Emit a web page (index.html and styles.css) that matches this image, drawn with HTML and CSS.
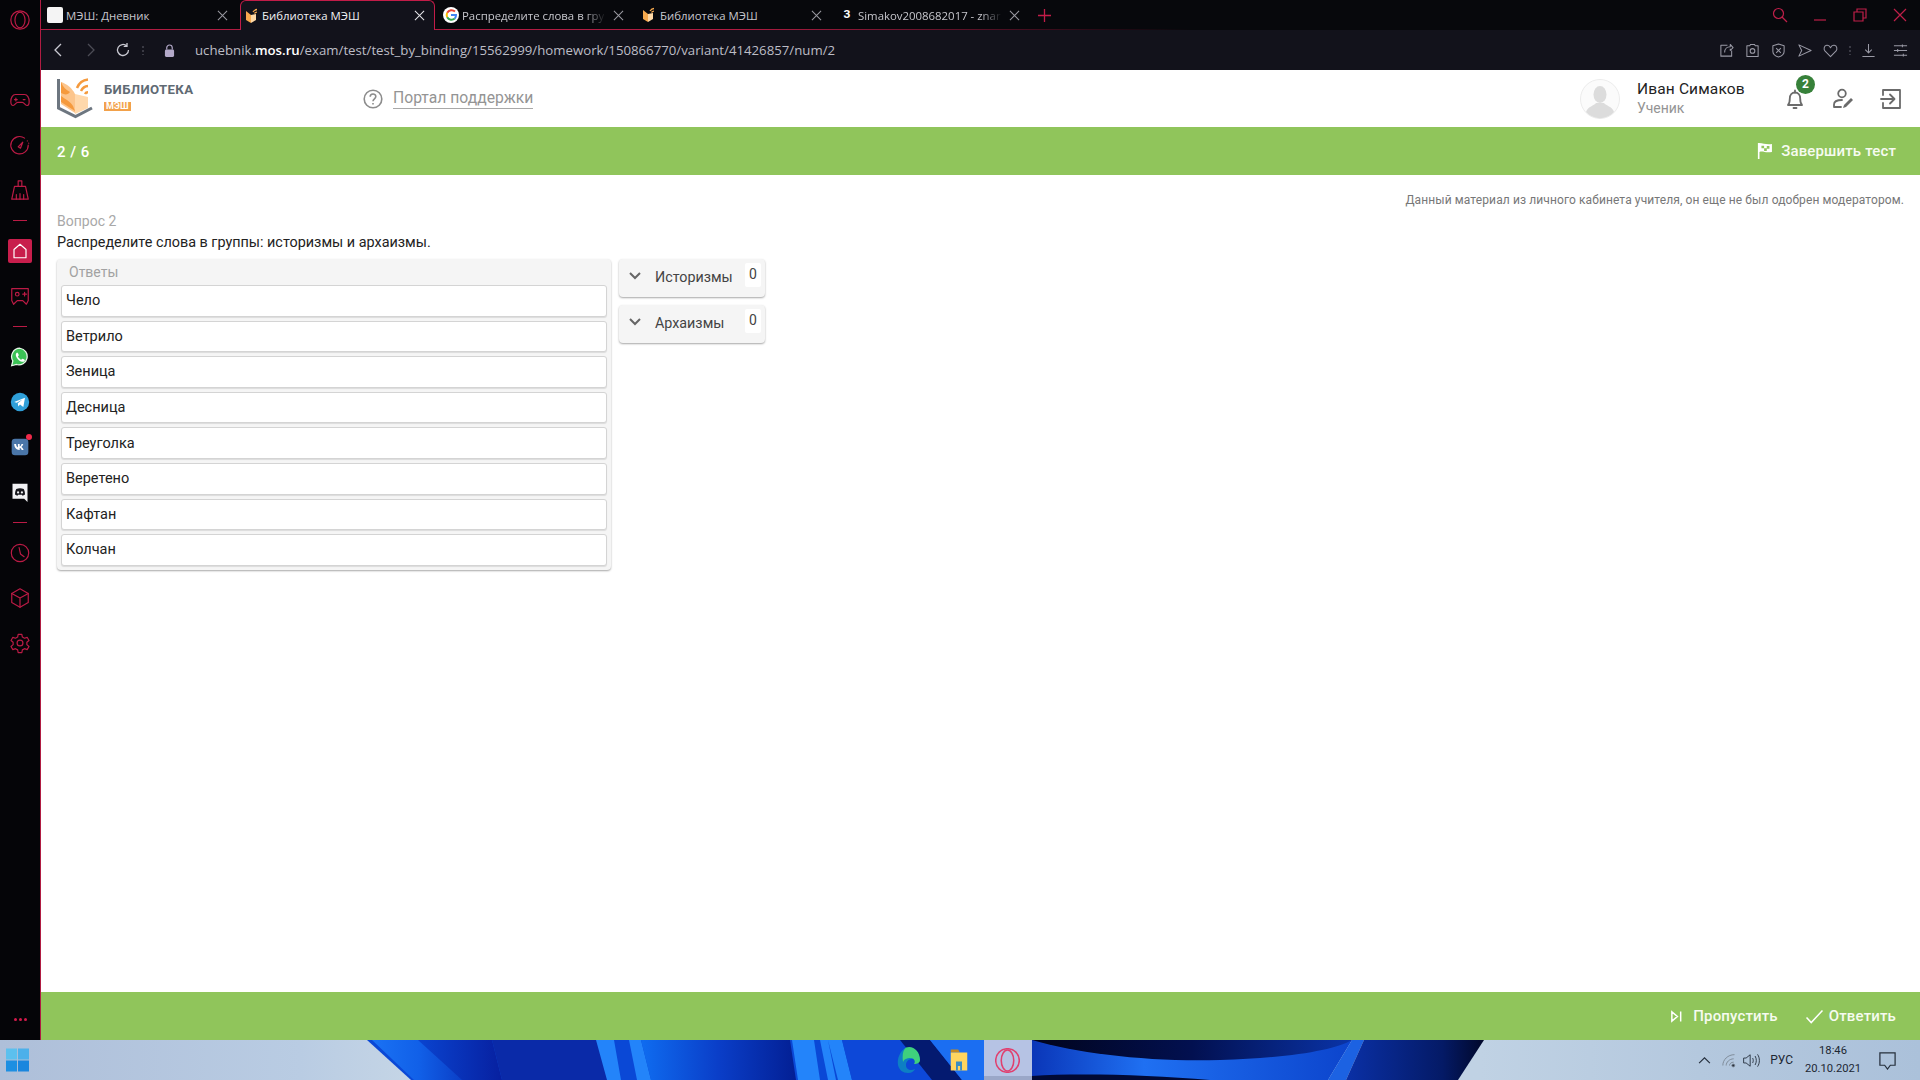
FILE: index.html
```html
<!DOCTYPE html>
<html lang="ru">
<head>
<meta charset="utf-8">
<title>Библиотека МЭШ</title>
<link rel="stylesheet" href="styles.css">
</head>
<body>
<div class="desktop">
  <aside class="sidebar">
    <div class="side-cell side-top"><svg class="si" viewBox="0 0 24 24"><ellipse cx="12" cy="12" rx="10" ry="10"/><ellipse cx="12" cy="12" rx="5.5" ry="8.5"/></svg></div>
    <div class="side-gap"></div>
    <div class="side-cell"><svg class="si" viewBox="0 0 24 24"><path d="M7 6h10c3 0 5 3.500 5 7.500 0 3-1 4.500-2.500 4.500-2 0-3-3.500-5-3.500h-5c-2 0-3 3.500-5 3.500C3 18 2 16.500 2 13.500 2 9.500 4 6 7 6z"/><path d="M6 11.500h3M7.500 10v3M15.500 11.500h2"/></svg></div>
    <div class="side-cell"><svg class="si" viewBox="0 0 24 24"><path d="M17 4.500A9.500 9.500 0 1 0 21 12"/><path d="M10 14l5-5-2.500 6.500z"/><path d="M20 7.500v.1M21.500 10v.1" /></svg></div>
    <div class="side-cell"><svg class="si" viewBox="0 0 24 24"><path d="M10 2h4v6h-4zM6 8h12l3 14H3z"/><path d="M8 22v-5M12 22v-6M16 22v-5"/></svg></div>
    <div class="side-sep"></div>
    <div class="side-cell"><div class="home-tile"><svg class="home-ic" viewBox="0 0 24 24"><path d="M12 3l8 7v11H4V10z"/></svg></div></div>
    <div class="side-cell"><svg class="si" viewBox="0 0 24 24"><path d="M3 4h18v13l-2 4-4-4H9l-4 4-2-4z"/><circle cx="9" cy="10" r="2"/><path d="M15 10h4M17 8v4"/></svg></div>
    <div class="side-sep"></div>
    <div class="side-cell"><svg class="app" viewBox="0 0 24 24"><path fill="#3cc356" stroke="#e9f7ea" stroke-width="1.500" d="M12 1.500a10 10 0 0 0-8.600 15.200L2 22.500l5.800-1.500A10 10 0 1 0 12 1.500z"/><path fill="#fff" d="M8.500 6.500c-.8.500-1.700 1.700-1.500 3.500.3 3 4 7.300 7.500 7.800 1.800.2 3-.7 3.300-1.900.1-.5-2.400-2-3-1.800-.5.2-1 1.300-1.500 1.200-1.400-.4-3.400-2.500-3.800-3.800-.1-.5 1-1 1.100-1.600.1-.5-1.200-3.200-2.100-3.400z"/></svg></div>
    <div class="side-cell"><svg class="app" viewBox="0 0 24 24"><circle cx="12" cy="12" r="11" fill="#2f9fd8"/><path fill="#fff" d="M5 12l13-5-2 11-4-3-2 2.500-.7-4 5.700-4.500-7 4z"/></svg></div>
    <div class="side-cell vk-cell"><svg class="app" viewBox="0 0 24 24"><rect x="2" y="2" width="20" height="20" rx="4" fill="#4a76a8"/><path fill="#fff" d="M5 8.500h2.300c.2 2.500 1.400 3.800 2.200 4V8.500h2.100v2.900c.9-.1 1.800-1.300 2.200-2.900h2.100c-.3 1.700-1.500 3-2.400 3.500.9.400 2.200 1.500 2.800 3.500h-2.300c-.5-1.400-1.500-2.400-2.400-2.500v2.500h-.4C7.800 15.500 5.200 13 5 8.500z"/></svg><span class="vk-dot"></span></div>
    <div class="side-cell"><svg class="app" viewBox="0 0 24 24"><path fill="#f2f2f4" d="M3 2h18v22l-4-4H3z"/><path fill="#17171c" d="M7.500 8.500c3-1.500 6-1.500 9 0 1 2 1.500 4 1.500 6.500-1 .8-2 1.200-3 1.400l-.7-1.200h-4.600l-.7 1.200c-1-.2-2-.6-3-1.400 0-2.500.5-4.500 1.500-6.500z"/><circle cx="9.700" cy="12.500" r="1.300" fill="#f2f2f4"/><circle cx="14.300" cy="12.500" r="1.300" fill="#f2f2f4"/></svg></div>
    <div class="side-sep"></div>
    <div class="side-cell"><svg class="si" viewBox="0 0 24 24"><circle cx="12" cy="12" r="9.500"/><path d="M11 6l1.500 7 4 3"/></svg></div>
    <div class="side-cell"><svg class="si" viewBox="0 0 24 24"><path d="M12 2l9 5v10l-9 5-9-5V7z"/><path d="M3 7l9 5 9-5M12 12v10"/></svg></div>
    <div class="side-cell"><svg class="si" viewBox="0 0 24 24"><circle cx="12" cy="12" r="3.200"/><path d="M10 2.500h4l.6 3 2.300 1.300 2.900-1 2 3.400-2.300 2v2.600l2.300 2-2 3.400-2.900-1-2.300 1.300-.6 3h-4l-.6-3-2.300-1.300-2.900 1-2-3.400 2.300-2v-2.600l-2.300-2 2-3.400 2.900 1 2.300-1.300z"/></svg></div>
    <div class="side-fill"></div>
    <div class="side-dots"><i></i><i></i><i></i></div>
  </aside>

  <div class="window">
    <div class="tabbar">
      <div class="tab tab-first"><span class="fav-blank"></span><span class="tab-title">МЭШ: Дневник</span><svg class="x" viewBox="0 0 12 12"><path d="M1 1l10 10M11 1L1 11"/></svg></div>
      <div class="tab tab-active"><svg class="fav" viewBox="0 0 16 16"><path fill="#f6a94e" d="M2 3l5 4v8l-5-3z"/><path fill="#ffd9a6" d="M7 7l5-1v6l-5 3z"/><path fill="none" stroke="#f6a94e" stroke-width="1.300" d="M9 4c1-1.500 2.500-2.500 4-2.500M10.500 5.500c.6-.8 1.500-1.300 2.500-1.300"/></svg><span class="tab-title">Библиотека МЭШ</span><svg class="x x-bright" viewBox="0 0 12 12"><path d="M1 1l10 10M11 1L1 11"/></svg></div>
      <div class="tab"><svg class="fav" viewBox="0 0 16 16"><circle cx="8" cy="8" r="8" fill="#fff"/><path fill="none" stroke="#ea4335" stroke-width="2" d="M12 4.600A5 5 0 0 0 4.200 5.800"/><path fill="none" stroke="#fbbc05" stroke-width="2" d="M4.200 5.800a5 5 0 0 0 0 4.400"/><path fill="none" stroke="#34a853" stroke-width="2" d="M4.200 10.200a5 5 0 0 0 7.600 1.300"/><path fill="none" stroke="#4285f4" stroke-width="2" d="M11.800 11.500A5 5 0 0 0 13 8H8"/></svg><span class="tab-title tab-fade">Распределите слова в гру</span><svg class="x" viewBox="0 0 12 12"><path d="M1 1l10 10M11 1L1 11"/></svg></div>
      <div class="tab"><svg class="fav" viewBox="0 0 16 16"><path fill="#f6a94e" d="M2 3l5 4v8l-5-3z"/><path fill="#ffd9a6" d="M7 7l5-1v6l-5 3z"/><path fill="none" stroke="#f6a94e" stroke-width="1.300" d="M9 4c1-1.500 2.500-2.500 4-2.500M10.500 5.500c.6-.8 1.500-1.300 2.500-1.300"/></svg><span class="tab-title">Библиотека МЭШ</span><svg class="x" viewBox="0 0 12 12"><path d="M1 1l10 10M11 1L1 11"/></svg></div>
      <div class="tab"><span class="fav-z">З</span><span class="tab-title tab-fade">Simakov2008682017 - znar</span><svg class="x" viewBox="0 0 12 12"><path d="M1 1l10 10M11 1L1 11"/></svg></div>
      <svg class="plus" viewBox="0 0 12 12"><path d="M6 0v12M0 6h12"/></svg>
      <div class="win-ctrls">
        <svg class="wc" viewBox="0 0 16 16"><circle cx="6.500" cy="6.500" r="5"/><path d="M10 10l5 5"/></svg>
        <svg class="wc" viewBox="0 0 16 16"><path d="M2 13h12"/></svg>
        <svg class="wc" viewBox="0 0 16 16"><path d="M2 5h9v9H2zM5 5V2h9v9h-3"/></svg>
        <svg class="wc" viewBox="0 0 16 16"><path d="M2 2l12 12M14 2L2 14"/></svg>
      </div>
    </div>

    <div class="urlbar">
      <svg class="nav" viewBox="0 0 12 16"><path d="M9 2L3 8l6 6"/></svg>
      <svg class="nav nav-off" viewBox="0 0 12 16"><path d="M3 2l6 6-6 6"/></svg>
      <svg class="nav reload" viewBox="0 0 16 16"><path d="M13.500 8a5.500 5.500 0 1 1-1.700-4M12 1v3.300H8.700"/></svg>
      <span class="dots-v"></span>
      <svg class="lock" viewBox="0 0 12 14"><path d="M3 6V4a3 3 0 0 1 6 0v2" fill="none" stroke="#b3a9c9" stroke-width="1.300"/><rect x="1" y="6" width="10" height="8" rx="1.500" fill="#b3a9c9"/></svg>
      <span class="url">uchebnik.<b>mos.ru</b>/exam/test/test_by_binding/15562999/homework/150866770/variant/41426857/num/2</span>
      <div class="url-tools">
        <svg class="ut" viewBox="0 0 16 16"><path d="M9 2.500H2v11.500h11.500V8M6 10c0-4 3-6 6-6V1.500l3 3.500-3 3V6"/></svg>
        <svg class="ut" viewBox="0 0 16 16"><path d="M5 3l1-1.500h4L11 3h3v11.500H2V3z"/><circle cx="8" cy="8.500" r="2.500"/></svg>
        <svg class="ut" viewBox="0 0 16 16"><path d="M8 1l6 2v6c0 3-3 5-6 6-3-1-6-3-6-6V3z"/><path d="M5.500 5.500l5 5M10.500 5.500l-5 5"/></svg>
        <svg class="ut" viewBox="0 0 16 16"><path d="M2 2l13 6-13 6 3-6z"/></svg>
        <svg class="ut" viewBox="0 0 16 16"><path d="M8 14.500L2 8.500C.5 6.500 1 3 4 2.500c2-.3 3.300 1 4 2.500.7-1.500 2-2.800 4-2.500 3 .5 3.500 4 2 6z"/></svg>
        <span class="dots-v dots-tool"></span>
        <svg class="ut" viewBox="0 0 16 16"><path d="M8 1v9M4.500 7L8 10.500 11.500 7M1.500 14.500h13"/></svg>
        <svg class="ut ut-end" viewBox="0 0 16 16"><path d="M1 3h14M1 8h14M1 13h14M10 1.500v3M5 6.500v3M11 11.500v3"/></svg>
      </div>
    </div>

    <header class="site-head">
      <svg class="logo" viewBox="0 0 36 41"><path fill="#fcc58c" d="M4 4c6 2 11 6 14 12v19L4 26z"/><path fill="#f59a3d" d="M4 4c2 5 5 8 9 10-2 3-5 3-9 1zM4 18c4 3 9 5 12 10l2 5-14-9z"/><path fill="#ffd8ab" d="M18 16l13 3v11l-13 6z"/><path fill="none" stroke="#6d7680" stroke-width="3" d="M1.500 1v29l17 8.500L35 30"/><path fill="none" stroke="#f59a3d" stroke-width="2.500" d="M20 10c1.800-4.500 6-8 11-8.500M24 13c1.500-3 4-4.800 7-5M28 16c.5-1 1.500-1.800 3-1.800"/></svg>
      <div class="brand"><span class="brand-name">БИБЛИОТЕКА</span><span class="brand-tag">МЭШ</span></div>
      <svg class="help" viewBox="0 0 20 20"><circle cx="10" cy="10" r="8.800"/><path d="M7.200 7.800c0-3.600 5.600-3.600 5.600-.2 0 2.200-2.800 2.200-2.800 4.600M10 14v1.400"/></svg>
      <a class="portal">Портал поддержки</a>
      <div class="head-right">
        <div class="avatar"><svg viewBox="0 0 40 40"><circle cx="20" cy="20" r="19.500" fill="#fbfbfb" stroke="#ececec"/><ellipse cx="20" cy="15.500" rx="6.500" ry="8.500" fill="#dcdcdc"/><path fill="#dcdcdc" d="M6 33c2-6 8-6 10-9h8c2 3 8 3 10 9a19 19 0 0 1-28 0z"/></svg></div>
        <div class="who"><span class="who-name">Иван Симаков</span><span class="who-role">Ученик</span></div>
        <div class="bell-wrap"><svg class="hi" viewBox="0 0 24 24"><path d="M5 18c1.500-1.500 1.800-3 1.800-6.500C6.800 8 9 5.500 12 5.500s5.200 2.500 5.200 6c0 3.500.3 5 1.800 6.500z"/><path d="M10.500 21h3M12 3.500v2"/></svg><span class="badge">2</span></div>
        <svg class="hi hi-edit" viewBox="0 0 24 24"><circle cx="11" cy="6.500" r="3.800"/><path d="M3 20v-2.500c0-3 3-4.500 8-4.500M3 20h7"/><path class="fillp" d="M20 11l2 2-7 7-3 1 1-3z"/></svg>
        <svg class="hi hi-exit" viewBox="0 0 24 24"><path d="M4 8V3h17v18H4v-5M2 12h13M11 7.500l4.500 4.500-4.500 4.500"/></svg>
      </div>
    </header>

    <div class="green-bar">
      <span class="progress">2 / 6</span>
      <span class="bar-action bar-finish"><svg class="flag" viewBox="0 0 18 20"><path d="M1 1v18h1.800v-8c4-1.500 6.500 1.500 14 0V2C10 3.500 7 .5 1 1z" fill="#fff"/><path fill="#90c55b" d="M5 4h3v3H5zM11 4.500h3v3h-3zM8 7h3v3H8z"/></svg>Завершить тест</span>
    </div>

    <main class="content">
      <p class="notice">Данный материал из личного кабинета учителя, он еще не был одобрен модератором.</p>
      <p class="q-num">Вопрос 2</p>
      <p class="q-text">Распределите слова в группы: историзмы и архаизмы.</p>
      <div class="board">
        <section class="answers">
          <h2 class="answers-title">Ответы</h2>
          <div class="answer">Чело</div>
          <div class="answer">Ветрило</div>
          <div class="answer">Зеница</div>
          <div class="answer">Десница</div>
          <div class="answer">Треуголка</div>
          <div class="answer">Веретено</div>
          <div class="answer">Кафтан</div>
          <div class="answer">Колчан</div>
        </section>
        <div class="groups">
          <div class="group"><svg class="chev" viewBox="0 0 12 8"><path d="M1 1l5 5 5-5"/></svg><span class="group-name">Историзмы</span><span class="count">0</span></div>
          <div class="group"><svg class="chev" viewBox="0 0 12 8"><path d="M1 1l5 5 5-5"/></svg><span class="group-name">Архаизмы</span><span class="count">0</span></div>
        </div>
      </div>
    </main>

    <div class="green-bar bar-bottom">
      <span class="bar-action bar-skip"><svg class="act" viewBox="0 0 14 14"><path d="M2 2l6 5-6 5zM11.500 1.500v11"/></svg>Пропустить</span>
      <span class="bar-action"><svg class="act act-check" viewBox="0 0 20 16"><path d="M1.500 9l5 5.500L18.500 1.500"/></svg>Ответить</span>
    </div>
  </div>

  <footer class="taskbar">
    <svg class="wall" viewBox="0 0 1920 40" preserveAspectRatio="none">
      <defs>
        <linearGradient id="w1" x1="0" x2="1" y1="0" y2="0"><stop offset="0" stop-color="#1a72f4"/><stop offset=".5" stop-color="#1160e8"/><stop offset="1" stop-color="#0a3cc4"/></linearGradient>
        <linearGradient id="w2" x1="0" x2="1" y1="0" y2="0"><stop offset="0" stop-color="#0f6cf0"/><stop offset=".5" stop-color="#0a3ec8"/><stop offset="1" stop-color="#031f94"/></linearGradient>
        <linearGradient id="w3" x1="0" x2="1" y1="0" y2="0"><stop offset="0" stop-color="#0a36b8"/><stop offset=".35" stop-color="#1f70f2"/><stop offset="1" stop-color="#0c44cc"/></linearGradient>
        <linearGradient id="w4" x1="0" x2="1" y1="0" y2="0"><stop offset="0" stop-color="#01041c"/><stop offset=".5" stop-color="#021050"/><stop offset="1" stop-color="#0a34a8"/></linearGradient>
        <linearGradient id="w5" x1="0" x2="1" y1="0" y2="0"><stop offset="0" stop-color="#0a30a6"/><stop offset=".7" stop-color="#041a66"/><stop offset="1" stop-color="#01082a"/></linearGradient>
        <linearGradient id="w6" x1="0" x2="1" y1="0" y2="0"><stop offset="0" stop-color="#0a44d0"/><stop offset="1" stop-color="#0720a0"/></linearGradient>
      </defs>
      <path fill="#0a48d6" d="M367 0H1033V40H411z"/>
      <path fill="url(#w1)" d="M372 0h50l44 40h-52z"/>
      <path fill="url(#w6)" d="M418 0h74l10 40h-40z"/>
      <path fill="#0a2aa8" d="M492 0h106l14 40h-110z"/>
      <path fill="#2384fa" d="M596 0h18l7 40h-14zM629 0h12l10 40h-14z"/>
      <path fill="url(#w2)" d="M641 0h149l6 40H651z"/>
      <path fill="#2384fa" d="M792 0h22l6 40h-22zM820 0h8l8 40h-8zM828 0h14l10 40h-14z"/>
      <path fill="#0d48d8" d="M842 0h70l50 40h-110z"/>
      <path fill="#041a70" d="M900 0h30l32 40h-30z"/>
      <path fill="#1b6ef2" d="M930 0h54v40h-22z"/>
      <rect x="984" y="0" width="48" height="40" fill="#b6c3e4"/>
      <rect x="984" y="36" width="48" height="4" fill="#9aa7c8"/>
      <path fill="url(#w3)" d="M1032 0h320l-24 40H1032z"/>
      <path fill="url(#w4)" d="M1032 0C1080 14 1150 22 1220 20 1290 18 1335 10 1352 0z"/>
      <path fill="#010a35" d="M1032 36C1080 33 1150 35 1210 40H1032z"/>
      <path fill="#1c62e2" d="M1352 0h12l-18 40h-18z"/>
      <path fill="url(#w5)" d="M1364 0H1484L1458 40H1346z"/>
    </svg>
    <svg class="start" viewBox="0 0 24 24"><rect x="0" y="0" width="11.500" height="11.500" fill="#5cc0ee"/><rect x="12.500" y="0" width="11.500" height="11.500" fill="#4cb0ea"/><rect x="0" y="12.500" width="11.500" height="11.500" fill="#1d8fe2"/><rect x="12.500" y="12.500" width="11.500" height="11.500" fill="#1a86de"/></svg>
    <div class="pins">
      <svg class="pin" viewBox="0 0 24 28"><path fill="#0d7fc4" d="M8 2C3 6 0 12 1 19c1 5 5 8 10 8 4 0 6-2 7-4-4 2-9 1-9-4 0-2 1-5 5-6 4-1 9 0 9 2 0-8-6-14-15-13z"/><path fill="#3fd07d" d="M9 1.500C16-1 23 5 23 14c0 3-3 4-6 4 2-3 0-6-4-6-3 0-6 1-7 4-1-7 0-12 3-14.500z"/></svg>
      <svg class="pin pin-folder" viewBox="0 0 24 32"><path fill="#c58a22" d="M1 2h10l2 4H1z"/><path fill="#ffd55f" d="M1 6h22v24H1z"/><path fill="#3a8ec4" d="M8 18h8v12h-2.500v-6h-3v6H8z"/></svg>
      <div class="pin-active"><svg class="pin-op" viewBox="0 0 24 24"><ellipse cx="12" cy="12" rx="11.300" ry="11.300"/><ellipse cx="12" cy="12" rx="6" ry="10"/></svg></div>
    </div>
    <div class="tray">
      <svg class="tr tr-chev" viewBox="0 0 14 10"><path d="M1 8l6-6 6 6"/></svg>
      <svg class="tr tr-wifi" viewBox="0 0 18 18"><path d="M1 15C1 8 7 2 15 2M5 15c0-4 4-8 9-8M9 15c0-2 2-4 5-4"/><circle cx="13.500" cy="15" r="1.700" fill="#26303d"/></svg>
      <svg class="tr tr-snd" viewBox="0 0 22 18"><path d="M2 6h3l5-4v14l-5-4H2zM13 6c1 2 1 4 0 6M16 3.500c2 3.500 2 7.500 0 11M19 1.500c3 4.500 3 10.500 0 15"/></svg>
      <span class="lang">РУС</span>
      <div class="clock"><span>18:46</span><span>20.10.2021</span></div>
      <svg class="tr tr-note" viewBox="0 0 20 20"><path d="M2 2h16v13h-5l-3 4-3-4H2z"/></svg>
    </div>
  </footer>
</div>
</body>
</html>
```

FILE: styles.css
```css
* { box-sizing: border-box; }
html, body { margin: 0; height: 100%; }
body { font-family: Roboto, "Liberation Sans", sans-serif; color: #222; background: #fff; overflow: hidden; }
p, h2 { margin: 0; font-weight: 400; }
svg { display: block; flex: none; }

.desktop { display: grid; grid-template-columns: 40px 1fr; grid-template-rows: 1fr 40px; width: 1920px; height: 1080px; }

/* Opera sidebar */
.sidebar { display: flex; flex-direction: column; align-items: center; background: #050508; }
.side-cell { position: relative; display: flex; align-items: center; justify-content: center; width: 40px; height: 45px; flex: none; }
.side-top { height: 40px; }
.side-gap { height: 37px; flex: none; }
.si { width: 22px; height: 22px; fill: none; stroke: #bb1b45; stroke-width: 1.300; stroke-linejoin: round; stroke-linecap: round; }
.side-sep { width: 14px; height: 16px; flex: none; background: linear-gradient(#bb1b45, #bb1b45) center / 14px 1px no-repeat; }
.home-tile { display: flex; align-items: center; justify-content: center; width: 24px; height: 24px; background: #c81e4c; border-radius: 2px; }
.home-ic { width: 18px; height: 18px; fill: none; stroke: #fff; stroke-width: 1.600; stroke-linejoin: round; }
.app { width: 20px; height: 20px; }
.vk-dot { position: absolute; top: 10px; right: 8px; width: 6px; height: 6px; background: #f02a4a; border-radius: 50%; }
.side-fill { flex: 1; }
.side-dots { display: flex; gap: 2px; height: 22px; flex: none; }
.side-dots i { width: 3px; height: 3px; background: #d41a4b; border-radius: 50%; }

/* Browser chrome */
.window { display: flex; flex-direction: column; min-width: 0; border-left: 1px solid #b01c42; }
.tabbar { display: flex; align-items: stretch; height: 30px; flex: none; background: #07080c linear-gradient(90deg, #b01c42, #b01c42 700px, #2a0a16 1050px, transparent 1150px) left bottom / 100% 1px no-repeat; }
.tab { display: flex; align-items: center; gap: 3px; width: 198px; flex: none; padding: 0 9px 0 8px; font-family: "Open Sans", "Noto Sans", sans-serif; font-size: 11.400px; color: #c6c6cc; }
.tab-first { width: 196px; padding-left: 6px; margin-right: 3px; }
.tab-active { width: 195px; padding: 0 9px 0 3px; gap: 2px; border: 1px solid #c21c48; border-bottom: 0; border-radius: 6px 6px 0 0; background: #12121b; color: #f1f1f4; }
.tab-title { flex: 1; overflow: hidden; white-space: nowrap; min-width: 0; }
.tab-fade { -webkit-mask-image: linear-gradient(90deg, #000 85%, transparent); mask-image: linear-gradient(90deg, #000 85%, transparent); }
.fav { width: 16px; height: 16px; }
.fav-blank { width: 16px; height: 16px; flex: none; background: #f4f4f4; border-radius: 2px; }
.fav-z { width: 16px; height: 16px; flex: none; font: 700 11px/16px Roboto, sans-serif; color: #fff; text-align: center; }
.x { width: 11px; height: 11px; fill: none; stroke: #9a9aa2; stroke-width: 1.100; margin-left: 4px; }
.x-bright { stroke: #e6e6ea; }
.plus { width: 13px; height: 13px; align-self: center; margin-left: 9px; fill: none; stroke: #c21c48; stroke-width: 1.200; }
.win-ctrls { display: flex; align-items: center; gap: 24px; margin-left: auto; padding-right: 12px; }
.wc { width: 16px; height: 16px; fill: none; stroke: #bf1f49; stroke-width: 1.200; }

.urlbar { display: flex; align-items: center; height: 40px; flex: none; padding: 0 12px 0 11px; background: #12121b; }
.nav { width: 12px; height: 16px; fill: none; stroke: #c9c9d2; stroke-width: 1.300; margin-right: 21px; }
.nav-off { stroke: #4c4c56; margin-right: 18px; }
.reload { width: 16px; height: 16px; margin-right: 11px; stroke: #c9c9d2; }
.dots-v { width: 2px; height: 10px; flex: none; margin-right: 20px; background: radial-gradient(circle, #3a3a44 1px, transparent 1px) 0 0 / 2px 4px; }
.lock { width: 11px; height: 13px; margin-right: 20px; }
.url { font-family: "Open Sans", "Noto Sans", sans-serif; font-size: 13.220px; color: #bdbdc6; white-space: nowrap; }
.url b { font-weight: 600; color: #fff; }
.url-tools { display: flex; align-items: center; gap: 11px; margin-left: auto; }
.ut { width: 15px; height: 15px; fill: none; stroke: #9a9aa6; stroke-width: 1.100; stroke-linejoin: round; }
.dots-tool { margin: 0 -1px 0 0; }
.ut-end { margin-left: 6px; }

/* Site header */
.site-head { display: flex; align-items: center; height: 57px; flex: none; padding: 0 17px 0 16px; background: #fff; }
.logo { width: 36px; height: 41px; margin-right: 11px; }
.brand { display: flex; flex-direction: column; align-items: flex-start; gap: 4px; width: 259px; margin-top: -5px; }
.brand-name { font-size: 13.200px; font-weight: 700; line-height: 16px; color: #5f6a73; letter-spacing: .35px; }
.brand-tag { padding: 0 2px; font-size: 9px; font-weight: 700; line-height: 9px; color: #fff; background: #f2a14a; letter-spacing: .2px; }
.help { width: 20px; height: 20px; margin-right: 10px; fill: none; stroke: #8c8c8c; stroke-width: 1.600; }
.portal { padding-bottom: 1px; font-size: 15.700px; line-height: 18px; color: #949494; border-bottom: 1px solid #a8a8a8; }
.head-right { display: flex; align-items: center; margin-left: auto; }
.avatar { width: 40px; height: 40px; margin-right: 17px; }
.who { display: flex; flex-direction: column; width: 146px; }
.who-name { font-size: 15.500px; line-height: 20px; color: #222; letter-spacing: .15px; }
.who-role { font-size: 14px; line-height: 19px; color: #949494; }
.bell-wrap { position: relative; margin-right: 24px; }
.hi { width: 24px; height: 24px; fill: none; stroke: #6b6b6b; stroke-width: 1.800; stroke-linejoin: round; stroke-linecap: round; }
.hi-edit { margin-right: 24px; }
.fillp { fill: #6b6b6b; stroke: none; }
.badge { position: absolute; top: -12px; right: -8px; width: 19px; height: 19px; font-size: 12px; font-weight: 700; line-height: 19px; color: #fff; text-align: center; background: #37813a; border-radius: 50%; }

/* Green bars */
.green-bar { display: flex; align-items: center; height: 48px; flex: none; padding: 0 24px 0 16px; font-size: 15px; font-weight: 500; color: #fff; background: #90c55b; }
.progress { letter-spacing: .5px; padding-top: 1px; }
.bar-action { display: flex; align-items: center; letter-spacing: .15px; color: #f6fbf0; }
.bar-finish { margin-left: auto; }
.flag { width: 16px; height: 18px; margin-right: 8px; }
.bar-bottom { justify-content: flex-end; }
.bar-skip { margin-right: 27px; }
.act { width: 13px; height: 13px; margin-right: 10px; fill: none; stroke: #fff; stroke-width: 1.600; }
.act-check { width: 19px; height: 15px; margin-right: 5px; }

/* Content */
.content { flex: 1; padding: 17px 16px 0 16px; background: #fff; min-height: 0; }
.notice { font-size: 12px; line-height: 16px; color: #777; text-align: right; letter-spacing: .11px; }
.q-num { margin-top: 4px; font-size: 14px; line-height: 18px; color: #a8a8a8; }
.q-text { margin-top: 4px; font-size: 14.400px; line-height: 18px; color: #222; }
.board { display: flex; align-items: flex-start; gap: 8px; margin-top: 7px; }
.answers { width: 554px; height: 311px; padding: 4px 4px 0; background: #f5f5f5; border-radius: 4px; box-shadow: 0 1px 2px rgba(0,0,0,.35); }
.answers-title { height: 22px; padding-left: 8px; font-size: 14px; line-height: 18px; color: #a2a2a2; }
.answer { display: flex; align-items: center; height: 31.600px; margin-bottom: 4px; padding-left: 4px; font-size: 14.500px; color: #222; background: #fff; border: 1px solid #d4d4d4; border-radius: 3px; box-shadow: 0 1px 1px rgba(0,0,0,.1); }
.groups { display: flex; flex-direction: column; gap: 8px; }
.group { display: flex; align-items: center; width: 146px; height: 38px; padding: 0 4px 2px 10px; background: #f5f5f5; border-radius: 4px; box-shadow: 0 1px 2px rgba(0,0,0,.35); }
.chev { width: 12px; height: 8px; margin: -2px 14px 0 0; fill: none; stroke: #666; stroke-width: 2; }
.group-name { flex: 1; font-size: 14.300px; color: #444; }
.count { width: 16px; height: 24px; margin-top: -4px; font-size: 14px; line-height: 22px; color: #444; text-align: center; background: #fff; border-radius: 2px; }

/* Taskbar */
.taskbar { position: relative; grid-column: 1 / -1; display: flex; align-items: center; height: 40px; padding-left: 6px; background: linear-gradient(90deg, #aebfd9, #b9cce3 300px, #c6d6e6 420px, #c0d2e4 1480px, #b4c8de 1700px, #abc1da); overflow: hidden; }
.wall { position: absolute; inset: 0; width: 100%; height: 100%; }
.start { position: relative; width: 23px; height: 24px; }
.pins { position: relative; display: flex; align-items: center; height: 40px; margin-left: 868px; }
.pin { width: 24px; height: 28px; }
.pin-folder { width: 24px; height: 24px; margin-left: 26px; }
.pin-active { display: flex; align-items: center; justify-content: center; width: 48px; height: 40px; margin-left: 12px; }
.pin-op { width: 25px; height: 25px; fill: none; stroke: #e0406f; stroke-width: 1.500; }
.tray { position: relative; display: flex; align-items: center; margin-left: auto; padding-right: 23px; font-size: 12px; color: #1d2733; }
.tr { fill: none; stroke: #26303d; stroke-width: 1.100; }
.tr-chev { width: 13px; height: 9px; margin-right: 11px; stroke-width: 1.300; }
.tr-wifi { width: 15px; height: 15px; margin-right: 5px; stroke: #7b8794; }
.tr-snd { width: 18px; height: 15px; margin-right: 10px; }
.lang { margin-right: 13px; }
.clock { display: flex; flex-direction: column; align-items: center; width: 54px; margin-right: 18px; font-size: 11.200px; line-height: 18px; }
.tr-note { width: 19px; height: 19px; stroke-width: 1.300; }
```
